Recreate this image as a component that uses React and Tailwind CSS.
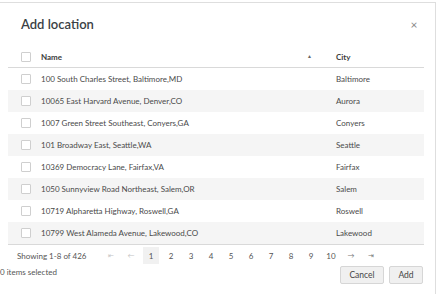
import React from 'react';

const rows = [
  ['100 South Charles Street, Baltimore,MD', 'Baltimore'],
  ['10065 East Harvard Avenue, Denver,CO', 'Aurora'],
  ['1007 Green Street Southeast, Conyers,GA', 'Conyers'],
  ['101 Broadway East, Seattle,WA', 'Seattle'],
  ['10369 Democracy Lane, Fairfax,VA', 'Fairfax'],
  ['1050 Sunnyview Road Northeast, Salem,OR', 'Salem'],
  ['10719 Alpharetta Highway, Roswell,GA', 'Roswell'],
  ['10799 West Alameda Avenue, Lakewood,CO', 'Lakewood'],
];

function Box() {
  return <div className="w-[10px] h-[10px] shrink-0 border border-[#cfcfcf] rounded-[1px] bg-white" />;
}

function App() {
  return (
    <div className="w-[438px] h-[294px] bg-white pt-[2px] overflow-hidden" style={{ fontFamily: 'Lato, "Open Sans", sans-serif' }}>
      <div className="w-[436px] h-full border-t border-r border-[#dedede]">
        {/* title */}
        <div className="h-[43px] flex items-center justify-between pl-[21px] pr-[16px]">
          <div className="text-[13px] font-semibold text-[#3b3f45]">Add location</div>
          <div className="w-[10px] text-center text-[12px] leading-none text-[#888]">×</div>
        </div>

        {/* table */}
        <div className="ml-[8px] w-[416px]">
          <div className="h-[22px] flex items-center pl-[13px] border-b border-[#d9d9d9]">
            <Box />
            <div className="ml-[10px] w-[266px] text-[8px] font-bold text-[#3c3c3c]">Name</div>
            <div className="w-[29px] text-[5px] text-[#666]">▲</div>
            <div className="text-[8px] font-bold text-[#3c3c3c]">City</div>
          </div>
          {rows.map(([name, city], i) => (
            <div key={i} className={`h-[22px] flex items-center pl-[13px] ${i % 2 === 1 ? 'bg-[#f5f5f5]' : ''}`}>
              <Box />
              <div className="ml-[10px] w-[295px] text-[8px] text-[#4a4a4a]">{name}</div>
              <div className="text-[8px] text-[#4a4a4a]">{city}</div>
            </div>
          ))}
          <div className="border-t border-[#d9d9d9] h-[22px] flex items-center pl-[9px] text-[8px] text-[#555]">
            <div className="w-[86px]">Showing 1-8 of 426</div>
            <div className="flex gap-[4px] items-center">
              <div className="w-[16px] text-center text-[7px] text-[#c4c4c4]">⇤</div>
              <div className="w-[16px] text-center text-[7px] text-[#c4c4c4]">←</div>
              {['1', '2', '3', '4', '5', '6', '7', '8', '9', '10'].map((n) => (
                <div key={n} className={`w-[16px] h-[17px] flex items-center justify-center ${n === '1' ? 'bg-[#f1f1f1]' : ''}`}>{n}</div>
              ))}
              <div className="w-[16px] text-center text-[7px] text-[#777]">→</div>
              <div className="w-[16px] text-center text-[7px] text-[#777]">⇥</div>
            </div>
          </div>
        </div>

        {/* bottom */}
        <div className="flex items-start justify-between pr-[12px]">
          <div className="text-[8px] leading-[12px] text-[#555]">0 items selected</div>
          <div className="flex gap-[5px]">
            <button className="w-[44px] h-[18px] bg-[#f0f0f0] border border-[#d6d6d6] rounded-[2px] text-[8.5px] text-[#444]">Cancel</button>
            <button className="w-[34px] h-[18px] bg-[#f0f0f0] border border-[#d6d6d6] rounded-[2px] text-[8.5px] text-[#444]">Add</button>
          </div>
        </div>
      </div>
    </div>
  );
}

export default App;
